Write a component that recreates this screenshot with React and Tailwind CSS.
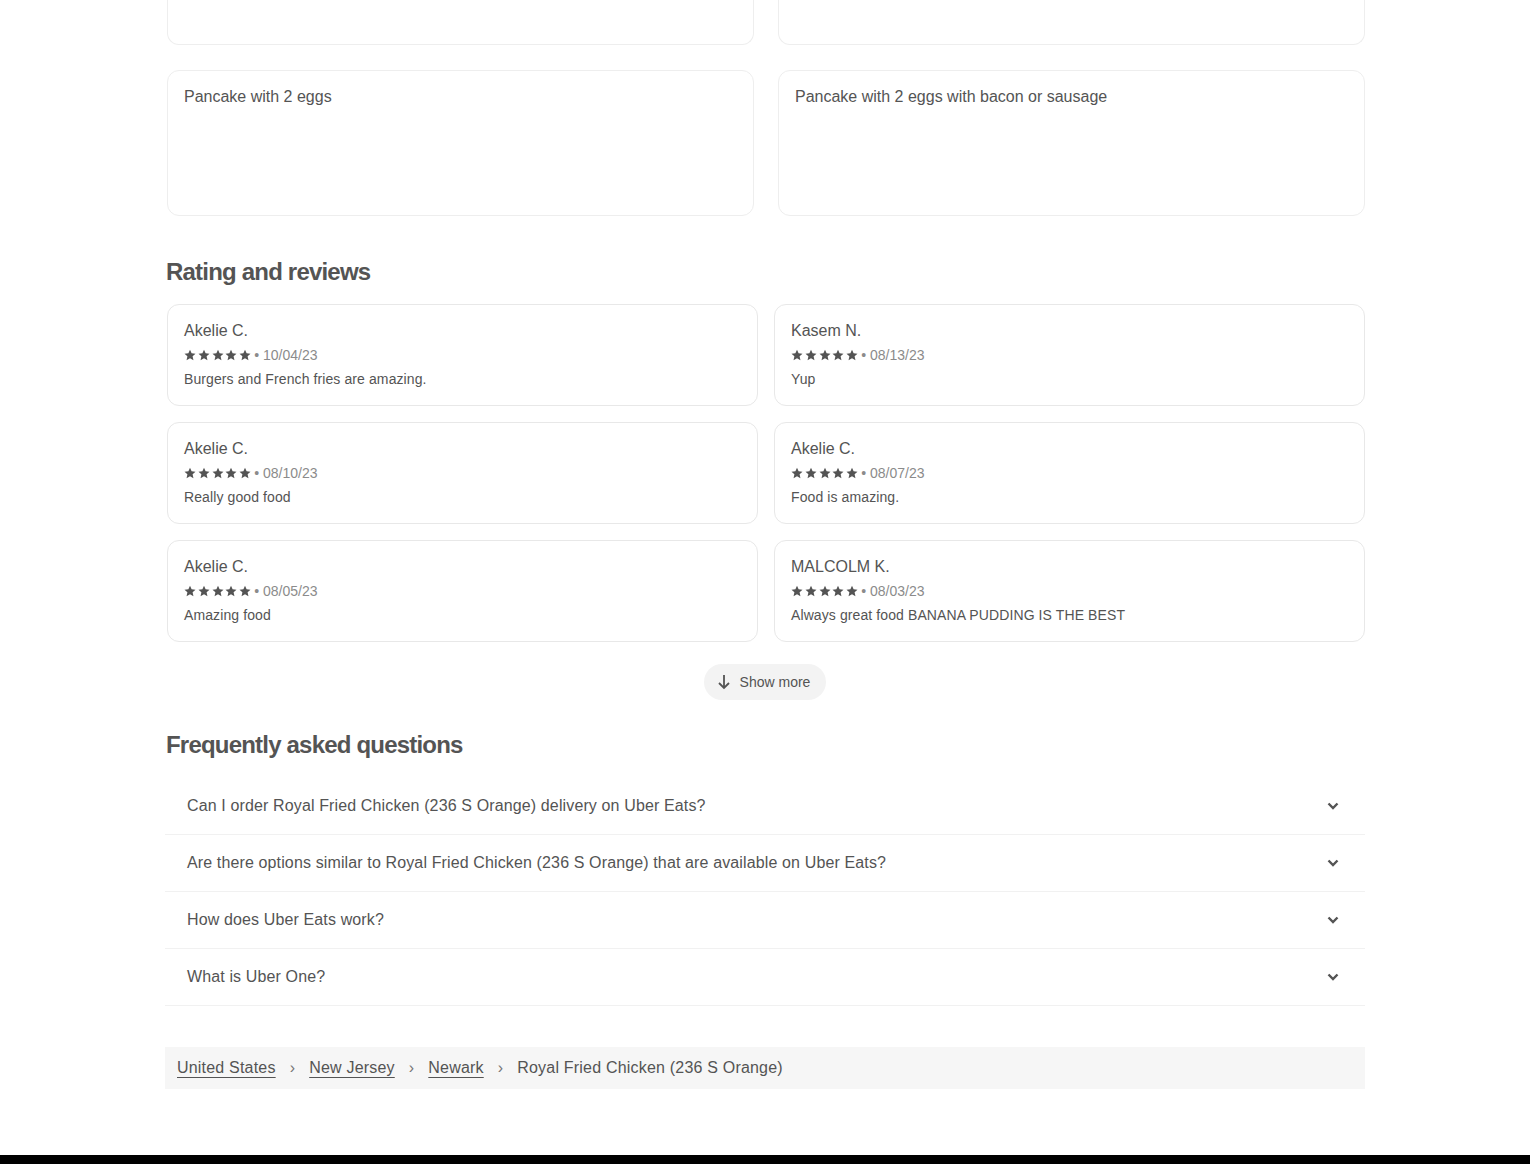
import React from 'react';

const reviews = [
  { name: 'Akelie C.', date: '10/04/23', text: 'Burgers and French fries are amazing.' },
  { name: 'Kasem N.', date: '08/13/23', text: 'Yup' },
  { name: 'Akelie C.', date: '08/10/23', text: 'Really good food' },
  { name: 'Akelie C.', date: '08/07/23', text: 'Food is amazing.' },
  { name: 'Akelie C.', date: '08/05/23', text: 'Amazing food' },
  { name: 'MALCOLM K.', date: '08/03/23', text: 'Always great food BANANA PUDDING IS THE BEST' },
];

const faqs = [
  'Can I order Royal Fried Chicken (236 S Orange) delivery on Uber Eats?',
  'Are there options similar to Royal Fried Chicken (236 S Orange) that are available on Uber Eats?',
  'How does Uber Eats work?',
  'What is Uber One?',
];

const Star = () => (
  <svg width="12" height="12" viewBox="0 0 24 24" fill="#545454">
    <path d="M12 1.5l3.2 7.1 7.8.8-5.8 5.2 1.7 7.7L12 18.4l-6.9 3.9 1.7-7.7L1 9.4l7.8-.8z" />
  </svg>
);

const Chevron = () => (
  <svg width="12" height="8" viewBox="0 0 12 8" fill="none">
    <path d="M1.5 1.5L6 6l4.5-4.5" stroke="#545454" strokeWidth="2.4" />
  </svg>
);

const ReviewCard = ({ review }) => (
  <div className="border border-[#e8e8e8] rounded-xl px-4 pt-4 pb-4 h-[102px]">
    <div className="text-[16px] leading-5">{review.name}</div>
    <div className="flex items-center mt-1 h-5">
      <div className="flex gap-[1.8px]">
        <Star /><Star /><Star /><Star /><Star />
      </div>
      <span className="text-[14px] text-[#8b8b8b] ml-[3px]">• {review.date}</span>
    </div>
    <div className="text-[14px] leading-5 mt-1 tracking-[0.1px]">{review.text}</div>
  </div>
);

export default function App() {
  return (
    <div className="bg-white text-[#545454]" style={{ fontFamily: '"Liberation Sans", Arial, sans-serif' }}>
      <div className="w-[1200px] mx-auto">
        <div className="grid grid-cols-2 gap-x-6 gap-y-[25px] pl-[2px]">
          <div className="h-[45px] border border-t-0 border-[#eeeeee] rounded-b-xl"></div>
          <div className="h-[45px] border border-t-0 border-[#eeeeee] rounded-b-xl"></div>
          <div className="h-[146px] border border-[#eeeeee] rounded-xl p-4 text-[16px] leading-5">Pancake with 2 eggs</div>
          <div className="h-[146px] border border-[#eeeeee] rounded-xl p-4 text-[16px] leading-5">Pancake with 2 eggs with bacon or sausage</div>
        </div>

        <h2 className="mt-10 text-[24px] leading-8 font-bold tracking-[-0.8px] pl-[1px]">Rating and reviews</h2>
        <div className="grid grid-cols-2 gap-4 mt-4 pl-[2px]">
          {reviews.map((r, i) => (
            <ReviewCard key={i} review={r} />
          ))}
        </div>

        <div className="flex justify-center mt-[22px]">
          <button className="h-9 flex items-center gap-[9px] rounded-full bg-[#f3f3f3] pl-[13px] pr-4 text-[14px] text-[#545454]">
            <svg width="14" height="16" viewBox="0 0 14 16" fill="none" stroke="#545454" strokeWidth="1.8">
              <path d="M7 1v13M2 9l5 5 5-5" />
            </svg>
            Show more
          </button>
        </div>

        <h2 className="mt-[29px] text-[24px] leading-8 font-bold tracking-[-0.8px] pl-[1px]">Frequently asked questions</h2>
        <div className="mt-[17px]">
          {faqs.map((q, i) => (
            <div key={i} className="h-[57px] flex items-center justify-between pl-[22px] pr-[26px] border-b border-[#f1f1f1] text-[16px] tracking-[0.13px]">
              <span>{q}</span>
              <Chevron />
            </div>
          ))}
        </div>

        <nav className="mt-[41px] h-[42px] bg-[#f6f6f6] flex items-center gap-[14px] px-3 text-[16px] text-[#545454] tracking-[0.2px]">
          <a className="underline underline-offset-4 decoration-[#545454]">United States</a>
          <span className="text-[#777]">›</span>
          <a className="underline underline-offset-4 decoration-[#545454]">New Jersey</a>
          <span className="text-[#777]">›</span>
          <a className="underline underline-offset-4 decoration-[#545454]">Newark</a>
          <span className="text-[#777]">›</span>
          <span>Royal Fried Chicken (236 S Orange)</span>
        </nav>
      </div>
      <div className="mt-[66px] h-[9px] bg-black"></div>
    </div>
  );
}
